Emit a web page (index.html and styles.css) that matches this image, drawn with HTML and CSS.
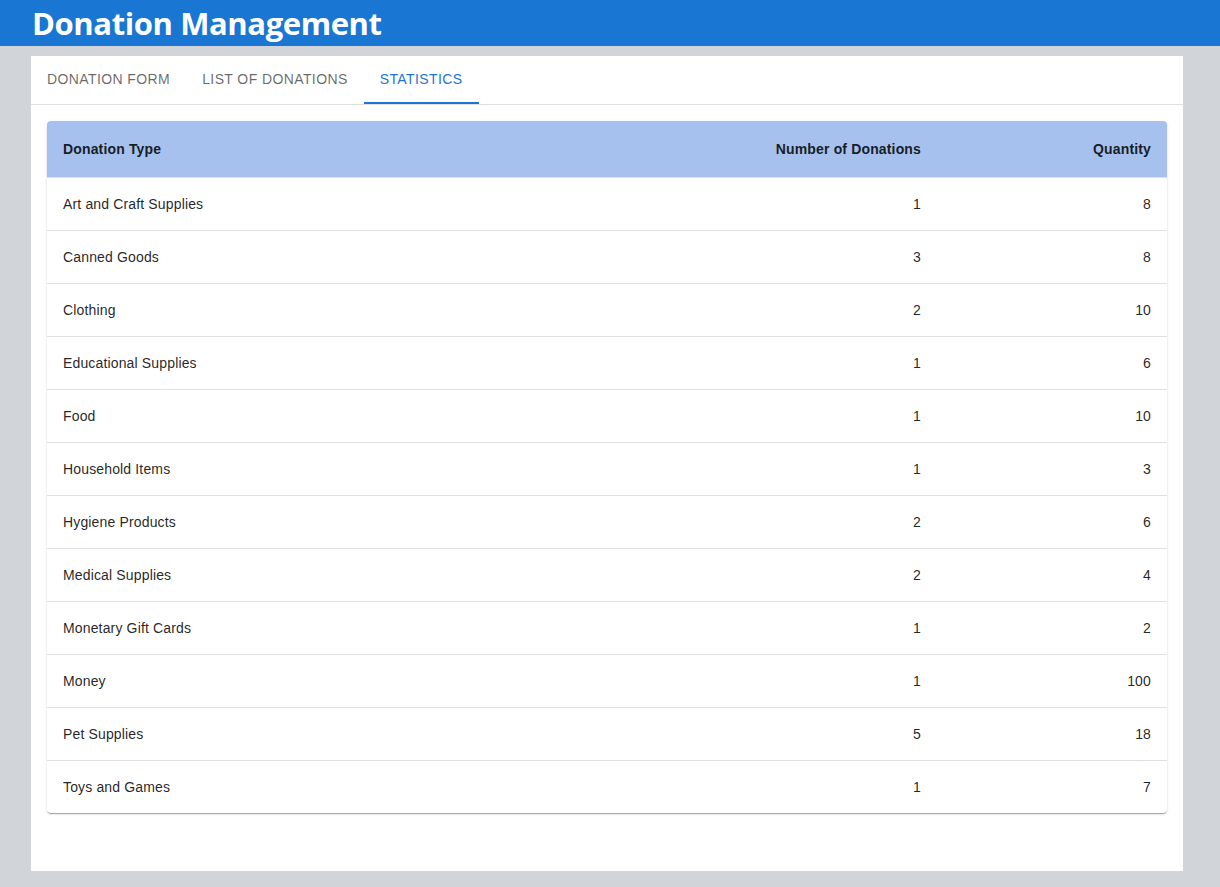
FILE: index.html
```html
<!DOCTYPE html>
<html>
<head>
<meta charset="utf-8">
<link rel="stylesheet" href="styles.css">
</head>
<body>
<header class="appbar"><h1 class="title">Donation Management</h1></header>
<main class="card">
  <nav class="tabs">
    <div class="tab">Donation Form</div>
    <div class="tab">List of Donations</div>
    <div class="tab active">Statistics</div>
  </nav>
  <section class="panel">
    <div class="table-wrap">
      <table class="stats">
        <thead>
          <tr><th class="c1">Donation Type</th><th class="num c2">Number of Donations</th><th class="num c3">Quantity</th></tr>
        </thead>
        <tbody>
          <tr><td>Art and Craft Supplies</td><td class="num">1</td><td class="num">8</td></tr>
          <tr><td>Canned Goods</td><td class="num">3</td><td class="num">8</td></tr>
          <tr><td>Clothing</td><td class="num">2</td><td class="num">10</td></tr>
          <tr><td>Educational Supplies</td><td class="num">1</td><td class="num">6</td></tr>
          <tr><td>Food</td><td class="num">1</td><td class="num">10</td></tr>
          <tr><td>Household Items</td><td class="num">1</td><td class="num">3</td></tr>
          <tr><td>Hygiene Products</td><td class="num">2</td><td class="num">6</td></tr>
          <tr><td>Medical Supplies</td><td class="num">2</td><td class="num">4</td></tr>
          <tr><td>Monetary Gift Cards</td><td class="num">1</td><td class="num">2</td></tr>
          <tr><td>Money</td><td class="num">1</td><td class="num">100</td></tr>
          <tr><td>Pet Supplies</td><td class="num">5</td><td class="num">18</td></tr>
          <tr><td>Toys and Games</td><td class="num">1</td><td class="num">7</td></tr>
        </tbody>
      </table>
    </div>
  </section>
</main>
</body>
</html>
```
FILE: styles.css
```css
html, body { margin: 0; padding: 0; }
body {
  background: #d1d5da;
  font-family: "Liberation Sans", Arial, sans-serif;
  color: rgba(0,0,0,0.87);
  height: 887px;
  overflow: hidden;
}
.appbar {
  background: #1976d2;
  height: 46px;
  display: flex;
  align-items: center;
  padding-left: 32px;
}
.title {
  margin: 0;
  color: #fff;
  font-family: "Open Sans", sans-serif;
  font-weight: 700;
  font-size: 31px;
  line-height: 44px;
  letter-spacing: -0.4px;
}
.card {
  background: #fff;
  margin: 10px 37px 0 31px;
  height: 815px;
  box-sizing: border-box;
}
.tabs {
  display: flex;
  border-bottom: 1px solid #e0e0e0;
  height: 48px;
}
.tab {
  padding: 0 16px 2px;
  font-size: 14px;
  text-transform: uppercase;
  letter-spacing: 0.4px;
  color: rgba(0,0,0,0.6);
  display: flex;
  align-items: center;
  box-sizing: border-box;
  height: 48px;
}
.tab.active {
  color: #1976d2;
  border-bottom: 2px solid #1976d2;
  padding-bottom: 0;
}
.panel { padding: 16px; }
.table-wrap {
  box-shadow: 0 2px 1px -1px rgba(0,0,0,0.2), 0 1px 1px 0 rgba(0,0,0,0.14), 0 1px 3px 0 rgba(0,0,0,0.12);
  border-radius: 4px;
  overflow: hidden;
}
.stats {
  width: 100%;
  border-collapse: collapse;
  font-size: 14px;
  letter-spacing: 0.15px;
}
.stats th {
  background: #a6c1ed;
  font-weight: 700;
  height: 56px;
  padding: 0 16px;
  text-align: left;
  box-sizing: border-box;
}
.stats td {
  height: 53px;
  padding: 0 16px;
  border-top: 1px solid #e0e0e0;
  box-sizing: border-box;
}
.stats .num { text-align: right; }
.c3 { width: 230px; }
.c2 { width: 300px; }
```
